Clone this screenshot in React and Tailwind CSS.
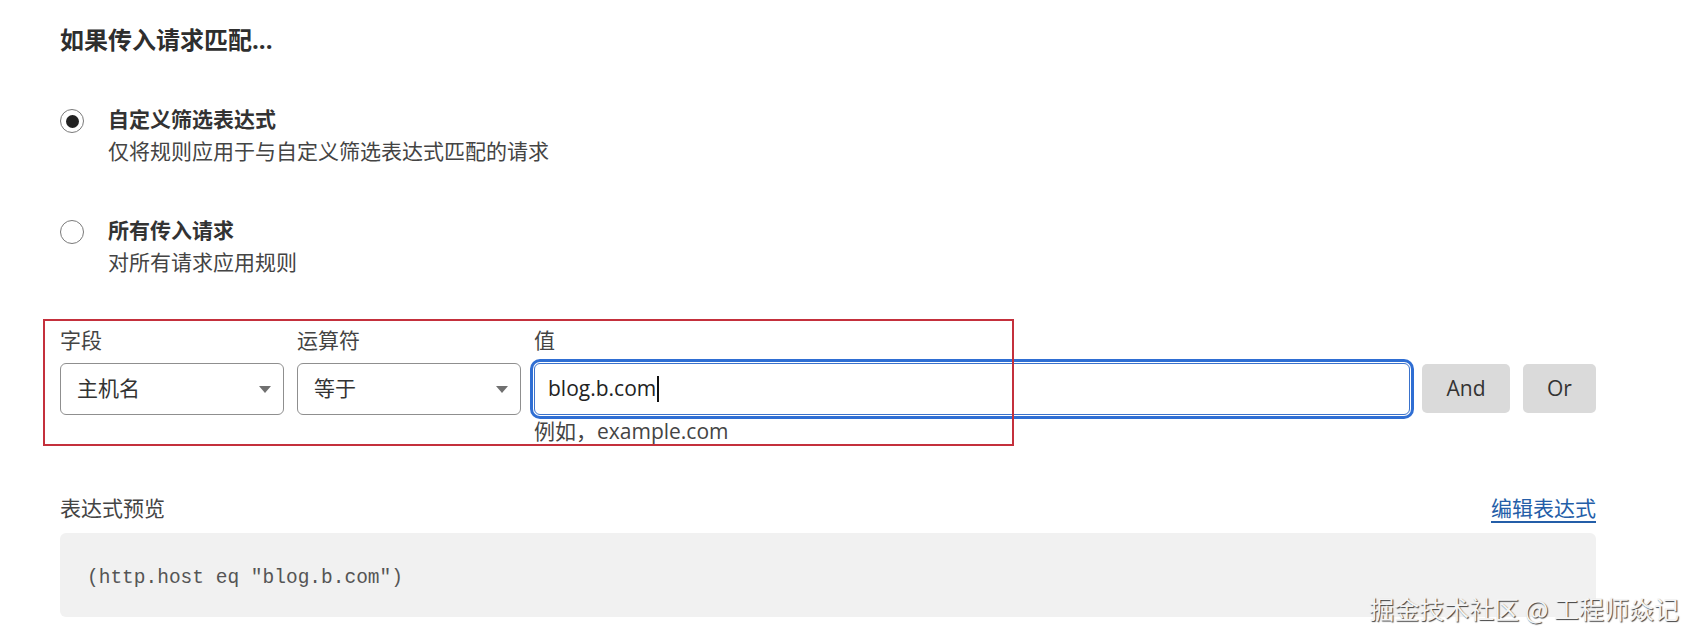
import React from "react";

function Radio({ checked }) {
  return (
    <div className="mt-[6px] w-[24px] h-[24px] shrink-0 rounded-full border border-[#7a7a7a] bg-white flex items-center justify-center">
      {checked && <div className="w-[13px] h-[13px] rounded-full bg-[#222]" />}
    </div>
  );
}

function Arrow() {
  return (
    <svg width="12" height="7" viewBox="0 0 12 7">
      <path d="M0 0H12L6 7Z" fill="#707070" />
    </svg>
  );
}

function Select({ value }) {
  return (
    <div className="h-[52px] rounded-[6px] border border-[#8f8f8f] bg-white flex items-center justify-between pl-[16px] pr-[12px] text-[21px] text-[#333]">
      <span>{value}</span>
      <Arrow />
    </div>
  );
}

export default function App() {
  return (
    <div className="relative w-[1700px] h-[642px] bg-white overflow-hidden font-['Open_Sans','Noto_Sans_CJK_SC',sans-serif] text-[#333]">
      <div className="ml-[60px] w-[1536px] pt-[24px] flex flex-col">
        <div className="text-[24px] leading-[32px] font-bold text-[#2e2e2e]">如果传入请求匹配...</div>

        <div className="mt-[47px] flex gap-[24px]">
          <Radio checked />
          <div className="flex flex-col">
            <div className="text-[21px] leading-[32px] font-bold text-[#333]">自定义筛选表达式</div>
            <div className="text-[21px] leading-[32px] text-[#444]">仅将规则应用于与自定义筛选表达式匹配的请求</div>
          </div>
        </div>

        <div className="mt-[47px] flex gap-[24px]">
          <Radio />
          <div className="flex flex-col">
            <div className="text-[21px] leading-[32px] font-bold text-[#333]">所有传入请求</div>
            <div className="text-[21px] leading-[32px] text-[#444]">对所有请求应用规则</div>
          </div>
        </div>

        <div className="mt-[46px] flex items-start">
          <div className="w-[224px] flex flex-col">
            <div className="text-[21px] leading-[32px] text-[#444]">字段</div>
            <div className="mt-[7px]">
              <Select value="主机名" />
            </div>
          </div>
          <div className="ml-[13px] w-[224px] flex flex-col">
            <div className="text-[21px] leading-[32px] text-[#444]">运算符</div>
            <div className="mt-[7px]">
              <Select value="等于" />
            </div>
          </div>
          <div className="ml-[13px] flex-1 flex flex-col">
            <div className="text-[21px] leading-[32px] text-[#444]">值</div>
            <div className="mt-[7px] h-[52px] rounded-[6px] border border-[#3a72cc] bg-white shadow-[0_0_0_1px_#ffffff,0_0_0_4px_#2f6ed3] flex items-center pl-[13px] text-[21px] text-[#222]">
              <span>blog.b.com</span>
              <span className="inline-block w-[2px] h-[26px] bg-[#111] ml-[1px]" />
            </div>
            <div className="mt-[2px] text-[21px] leading-[28px] text-[#444]">例如，example.com</div>
          </div>
          <div className="ml-[12px] pt-[40px] flex gap-[13px]">
            <div className="w-[88px] h-[49px] rounded-[5px] bg-[#dadada] flex items-center justify-center text-[21px] text-[#333]">And</div>
            <div className="w-[73px] h-[49px] rounded-[5px] bg-[#dadada] flex items-center justify-center text-[21px] text-[#333]">Or</div>
          </div>
        </div>

        <div className="mt-[47px] flex items-center justify-between">
          <div className="text-[21px] leading-[32px] text-[#444]">表达式预览</div>
          <div className="text-[21px] leading-[32px] text-[#245ea8] underline decoration-2 underline-offset-[5px]">编辑表达式</div>
        </div>

        <div className="mt-[9px] h-[84px] rounded-[6px] bg-[#f1f1f1] flex items-center pl-[27px] pt-[7px]">
          <span className="font-['Liberation_Mono',monospace] text-[19.5px] text-[#555]">(http.host eq "blog.b.com")</span>
        </div>
      </div>

      <div className="absolute left-[43px] top-[319px] w-[971px] h-[127px] border-2 border-[#c4303c] pointer-events-none" />

      <div className="absolute right-[21px] top-[592px] text-[25px] leading-[32px] text-[#f4f4f4] [text-shadow:1px_1px_1px_rgba(0,0,0,0.75)] whitespace-nowrap font-['Noto_Sans_CJK_SC',sans-serif]">
        掘金技术社区 @ 工程师焱记
      </div>
    </div>
  );
}
